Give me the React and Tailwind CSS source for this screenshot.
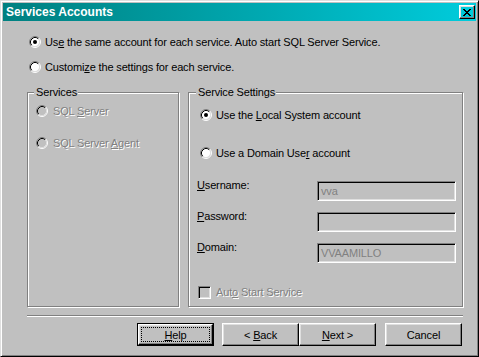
import React from "react";

const font = { fontFamily: '"Liberation Sans", Arial, sans-serif' };

const raised =
  "border border-t-white border-l-white border-b-black border-r-black shadow-[inset_-1px_-1px_0_#808080,inset_1px_1px_0_#dfdfdf]";
const sunken =
  "border border-t-[#808080] border-l-[#808080] border-b-white border-r-white shadow-[inset_1px_1px_0_#000,inset_-1px_-1px_0_#dfdfdf]";
const etched = "border border-[#808080] shadow-[1px_1px_0_#fff,inset_1px_1px_0_#fff]";
const dim = "text-[#808080] [text-shadow:1px_1px_0_#fff]";

function Radio({ checked, disabled }) {
  return (
    <svg width="12" height="12" viewBox="0 0 12 12" className="shrink-0">
      <circle cx="6" cy="6" r="4.5" fill={disabled ? "#c0c0c0" : "#fff"} />
      <path d="M2.11 9.89 A5.5 5.5 0 0 1 9.89 2.11" stroke="#808080" fill="none" />
      <path d="M9.89 2.11 A5.5 5.5 0 0 1 2.11 9.89" stroke="#fff" fill="none" />
      <path d="M2.82 9.18 A4.5 4.5 0 0 1 9.18 2.82" stroke="#000" fill="none" />
      <path d="M9.18 2.82 A4.5 4.5 0 0 1 2.82 9.18" stroke="#dfdfdf" fill="none" />
      {checked && <circle cx="6" cy="6" r="2" fill="#000" />}
    </svg>
  );
}

function CloseGlyph() {
  const rows = [0, 1, 2, 3, 4, 5, 6];
  return (
    <svg width="8" height="7" viewBox="0 0 8 7" shapeRendering="crispEdges">
      {rows.map((i) => (
        <g key={i}>
          <rect x={i} y={i} width="2" height="1" fill="#000" />
          <rect x={6 - i} y={i} width="2" height="1" fill="#000" />
        </g>
      ))}
    </svg>
  );
}

function Field({ label, value }) {
  return (
    <div className="flex items-start">
      <span className="w-[128px] pl-[8px] -mt-[2px] leading-[12px] text-black">{label}</span>
      <div className={`${sunken} w-[139px] h-[20px] bg-[#c0c0c0] pl-[3px] flex items-center text-[#808080]`}>
        {value}
      </div>
    </div>
  );
}

function Button({ children, isDefault }) {
  if (isDefault) {
    return (
      <div className="w-[77px] h-[23px] border border-black">
        <div className={`${raised} w-full h-full p-[2px]`}>
          <div className="w-full h-full border border-dotted border-black flex items-center justify-center">
            {children}
          </div>
        </div>
      </div>
    );
  }
  return (
    <div className={`${raised} w-[77px] h-[23px] flex items-center justify-center`}>{children}</div>
  );
}

export default function App() {
  return (
    <div
      style={font}
      className="w-[479px] h-[357px] bg-[#c0c0c0] text-[11px] leading-[12px] tracking-[-0.15px] text-black border border-t-[#dfdfdf] border-l-[#dfdfdf] border-b-black border-r-black shadow-[inset_1px_1px_0_#fff,inset_-1px_-1px_0_#808080] p-[2px] flex flex-col overflow-hidden"
    >
      {/* title bar */}
      <div className="h-[18px] flex items-center justify-between pl-[3px] pr-[1px] bg-gradient-to-r from-[#008080] to-[#00ccdc]">
        <span className="text-white font-bold text-[12px] tracking-normal">Services Accounts</span>
        <div className={`${raised} w-[16px] h-[14px] flex items-center justify-center`}>
          <CloseGlyph />
        </div>
      </div>

      <div className="flex flex-col pl-[24px] pr-[13px]">
        <div className="mt-[13px] h-[16px] flex items-center gap-[4px] pl-[2px]">
          <Radio checked />
          <span>
            Us<u>e</u> the same account for each service. Auto start SQL Server Service.
          </span>
        </div>
        <div className="mt-[9px] h-[16px] flex items-center gap-[4px] pl-[2px]">
          <Radio />
          <span>
            Customi<u>z</u>e the settings for each service.
          </span>
        </div>

        <div className="mt-[17px] flex gap-[9px] h-[215px]">
          {/* Services */}
          <div className={`${etched} relative w-[152px] flex flex-col pl-[8px]`}>
            <span className="absolute -top-[7px] left-[6px] pl-[2px] pr-[1px] bg-[#c0c0c0]">Services</span>
            <div className="mt-[10px] h-[16px] flex items-center gap-[5px]">
              <Radio disabled />
              <span className={dim}>
                SQL <u>S</u>erver
              </span>
            </div>
            <div className="mt-[16px] h-[16px] flex items-center gap-[5px]">
              <Radio disabled />
              <span className={dim}>
                SQL Server <u>A</u>gent
              </span>
            </div>
          </div>

          {/* Service Settings */}
          <div className={`${etched} relative w-[275px] flex flex-col`}>
            <span className="absolute -top-[7px] left-[7px] pl-[2px] pr-[1px] bg-[#c0c0c0]">Service Settings</span>
            <div className="mt-[14px] h-[16px] flex items-center gap-[4px] pl-[11px]">
              <Radio checked />
              <span>
                Use the <u>L</u>ocal System account
              </span>
            </div>
            <div className="mt-[22px] h-[16px] flex items-center gap-[4px] pl-[11px]">
              <Radio />
              <span>
                Use a Domain Use<u>r</u> account
              </span>
            </div>
            <div className="mt-[20px] flex flex-col gap-[11px]">
              <Field label={<><u>U</u>sername:</>} value="vva" />
              <Field label={<><u>P</u>assword:</>} value="" />
              <Field label={<><u>D</u>omain:</>} value="VVAAMILLO" />
            </div>
            <div className="mt-[21px] h-[16px] flex items-center gap-[5px] pl-[9px]">
              <span className={`${sunken} w-[13px] h-[13px] bg-[#c0c0c0] shrink-0`} />
              <span className={dim}>
                Aut<u>o</u> Start Service
              </span>
            </div>
          </div>
        </div>

        <div className="mt-[8px] h-[2px] border-t border-t-[#808080] border-b border-b-white" />

        <div className="mt-[6px] flex justify-end pr-[1px]">
          <Button isDefault>
            <span>
              <u>H</u>elp
            </span>
          </Button>
          <div className="ml-[8px]">
            <Button>
              <span>
                &lt; <u>B</u>ack
              </span>
            </Button>
          </div>
          <Button>
            <span>
              <u>N</u>ext &gt;
            </span>
          </Button>
          <div className="ml-[9px]">
            <Button>Cancel</Button>
          </div>
        </div>
      </div>
    </div>
  );
}
